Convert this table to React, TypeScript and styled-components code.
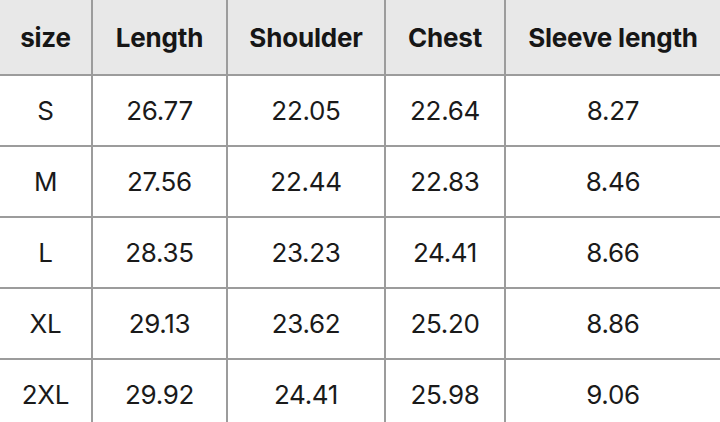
import styled, { createGlobalStyle } from "styled-components";

const GlobalStyle = createGlobalStyle`
  html, body {
    margin: 0;
    padding: 0;
    background: #fff;
    overflow: hidden;
  }
  body {
    font-family: Inter, "Liberation Sans", sans-serif;
    -webkit-font-smoothing: antialiased;
  }
`;

const columns = ["size", "Length", "Shoulder", "Chest", "Sleeve length"];

const rows = [
  ["S", "26.77", "22.05", "22.64", "8.27"],
  ["M", "27.56", "22.44", "22.83", "8.46"],
  ["L", "28.35", "23.23", "24.41", "8.66"],
  ["XL", "29.13", "23.62", "25.20", "8.86"],
  ["2XL", "29.92", "24.41", "25.98", "9.06"],
];

const SizeTable = styled.div`
  display: grid;
  grid-template-columns: 91px 133px 156px 118px 1fr;
  grid-template-rows: 74px repeat(5, 69px);
  gap: 2px;
  width: 720px;
  background: #9c9c9c;
`;

const HeadCell = styled.div`
  display: flex;
  align-items: center;
  justify-content: center;
  background: #e8e8e8;
  color: #161616;
  font-size: 26px;
  font-weight: 700;
  letter-spacing: -0.2px;
`;

const Cell = styled.div`
  display: flex;
  align-items: center;
  justify-content: center;
  background: #fff;
  color: #1a1a1a;
  font-size: 26px;
  font-weight: 400;
  letter-spacing: -0.3px;
`;

export default function App() {
  return (
    <>
      <GlobalStyle />
      <SizeTable>
        {columns.map((c) => (
          <HeadCell key={c}>{c}</HeadCell>
        ))}
        {rows.map((r) =>
          r.map((v, i) => <Cell key={r[0] + i}>{v}</Cell>)
        )}
      </SizeTable>
    </>
  );
}
